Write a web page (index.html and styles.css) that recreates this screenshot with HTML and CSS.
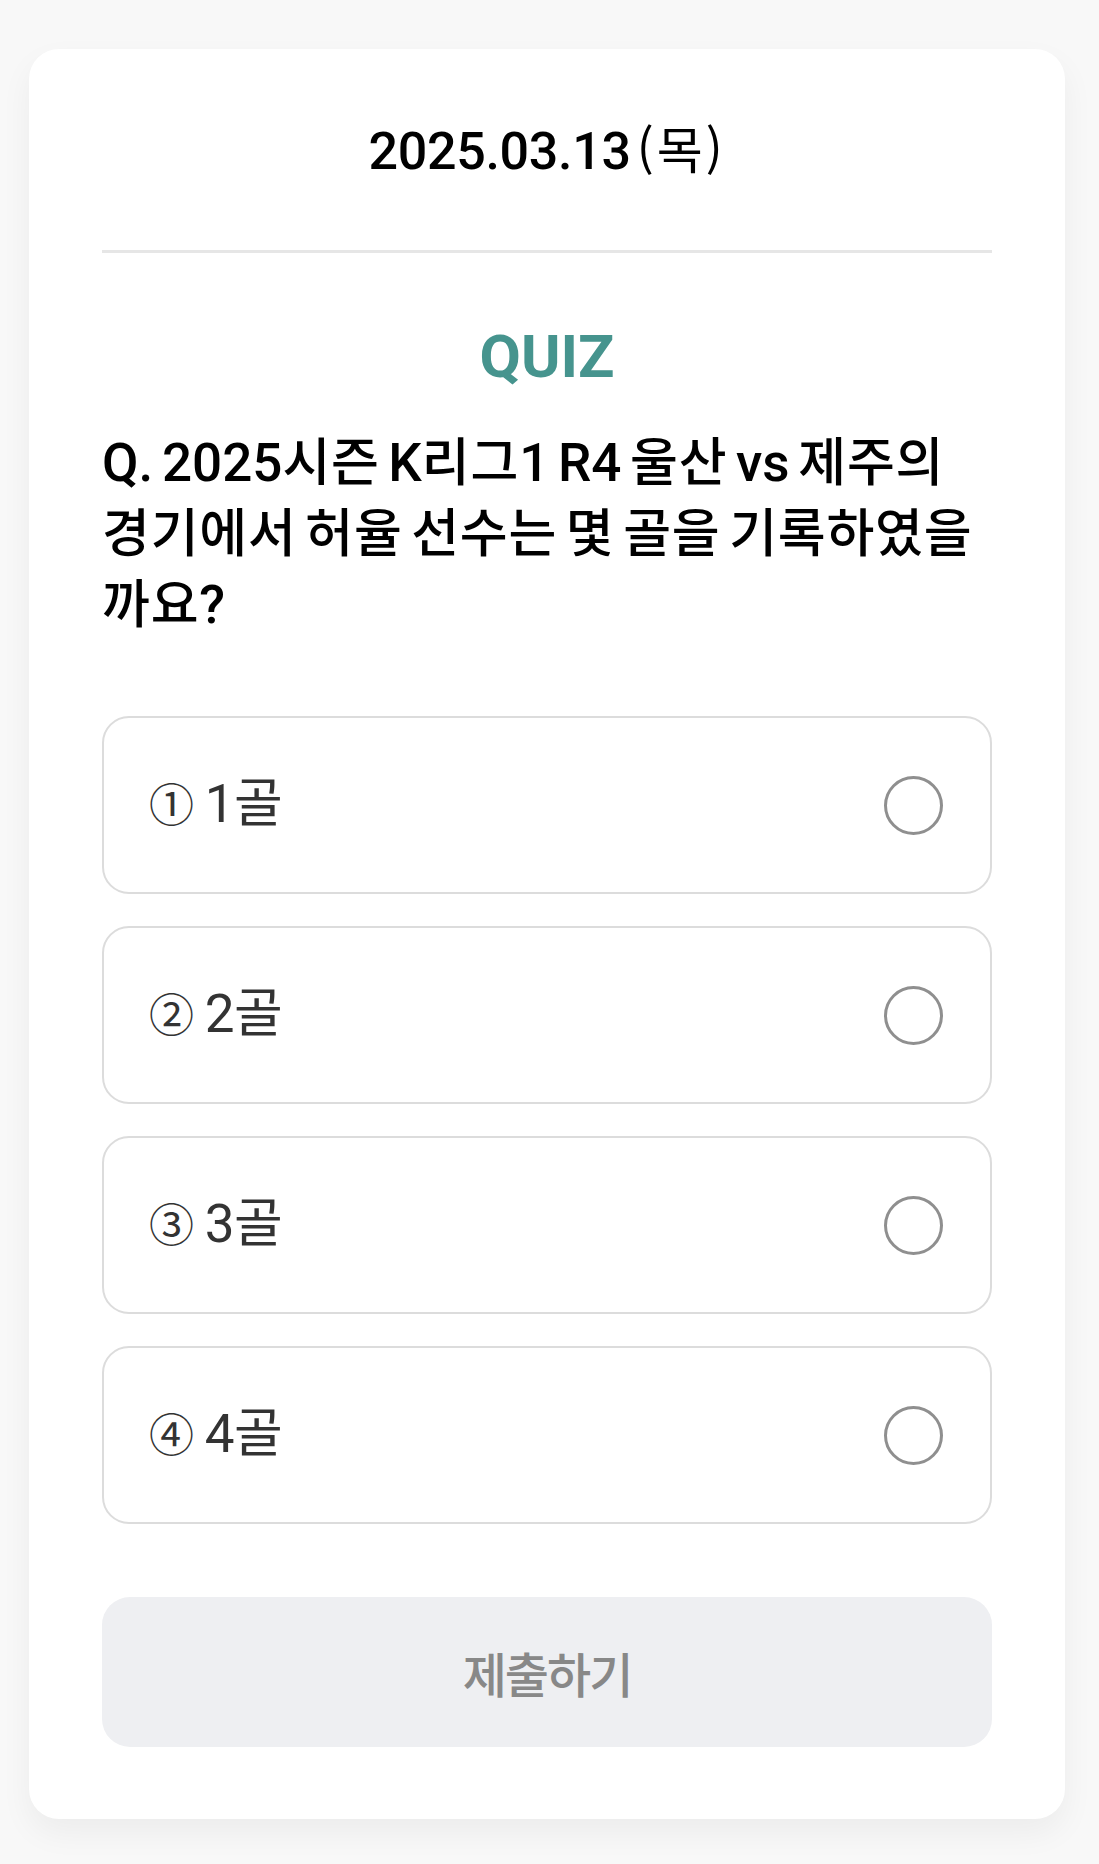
FILE: index.html
```html
<!DOCTYPE html>
<html lang="ko">
<head>
<meta charset="utf-8">
<title>QUIZ</title>
<link rel="stylesheet" href="styles.css">
</head>
<body>
<main class="card">
  <header class="date-bar">
    <span class="date">2025.03.13</span><span class="weekday">(목)</span>
  </header>
  <section class="quiz">
    <h2 class="quiz-label">QUIZ</h2>
    <p class="question">Q. 2025<span class="ko">시즌</span> K<span class="ko">리그</span>1 R4 <span class="ko">울산</span> vs <span class="ko">제주의</span><br><span class="ko">경기에서</span> <span class="ko">허율</span> <span class="ko">선수는</span> <span class="ko">몇</span> <span class="ko">골을</span> <span class="ko">기록하였을</span><br><span class="ko">까요</span>?</p>
    <ul class="options">
      <li class="option"><span class="option-text"><span class="num">①</span> 1골</span><span class="radio"></span></li>
      <li class="option"><span class="option-text"><span class="num">②</span> 2골</span><span class="radio"></span></li>
      <li class="option"><span class="option-text"><span class="num">③</span> 3골</span><span class="radio"></span></li>
      <li class="option"><span class="option-text"><span class="num">④</span> 4골</span><span class="radio"></span></li>
    </ul>
    <button class="submit" type="button">제출하기</button>
  </section>
</main>
</body>
</html>
```

FILE: styles.css
```css
* { box-sizing: border-box; }

html, body {
  margin: 0;
  background: #f8f8f8;
}

body {
  padding: 49px 34px 45px 29px;
  font-family: Roboto, "Noto Sans CJK KR", "Noto Sans", sans-serif;
  color: #000;
}

.card {
  background: #fff;
  border-radius: 30px;
  padding: 67px 73px 72px;
  box-shadow: 0 14px 32px rgba(0, 0, 0, 0.05);
}

.date-bar {
  display: flex;
  justify-content: center;
  align-items: baseline;
  height: 137px;
  border-bottom: 3px solid #e6e6e6;
  line-height: 62px;
}

.date {
  font-size: 52px;
  font-weight: 500;
  letter-spacing: -0.3px;
}

.weekday {
  font-size: 50px;
  font-weight: 400;
  font-family: "Noto Sans CJK KR", sans-serif;
  margin-left: 6px;
  letter-spacing: 3px;
}

.quiz {
  display: flex;
  flex-direction: column;
}

.quiz-label {
  margin: 69px 0 0;
  text-align: center;
  font-size: 60px;
  line-height: 70px;
  font-weight: 700;
  color: #46948e;
}

.question {
  margin: 36px 0 0;
  font-size: 53px;
  line-height: 71px;
  font-weight: 500;
  color: #000;
  white-space: nowrap;
  word-spacing: -4.5px;
}

.ko {
  font-size: 52px;
  letter-spacing: 0.8px;
}

.options {
  list-style: none;
  margin: 75px 0 0;
  padding: 0;
  display: flex;
  flex-direction: column;
  gap: 32px;
}

.option {
  height: 178px;
  border: 2px solid #dcdcdc;
  border-radius: 27px;
  display: flex;
  align-items: center;
  justify-content: space-between;
  padding: 0 47px 0 45px;
}

.option-text {
  font-size: 53px;
  line-height: 62px;
  font-weight: 400;
  color: #333;
  letter-spacing: -0.5px;
}

.num {
  font-size: 45px;
  letter-spacing: -2px;
}

.radio {
  width: 59px;
  height: 59px;
  border: 3px solid #8f8f8f;
  border-radius: 50%;
  flex: none;
}

.submit {
  margin-top: 73px;
  height: 150px;
  border: 0;
  border-radius: 28px;
  background: #eeeff2;
  color: #888;
  font-family: "Noto Sans CJK KR", Roboto, sans-serif;
  font-size: 48px;
  font-weight: 500;
  letter-spacing: -2px;
  width: 100%;
}
```
